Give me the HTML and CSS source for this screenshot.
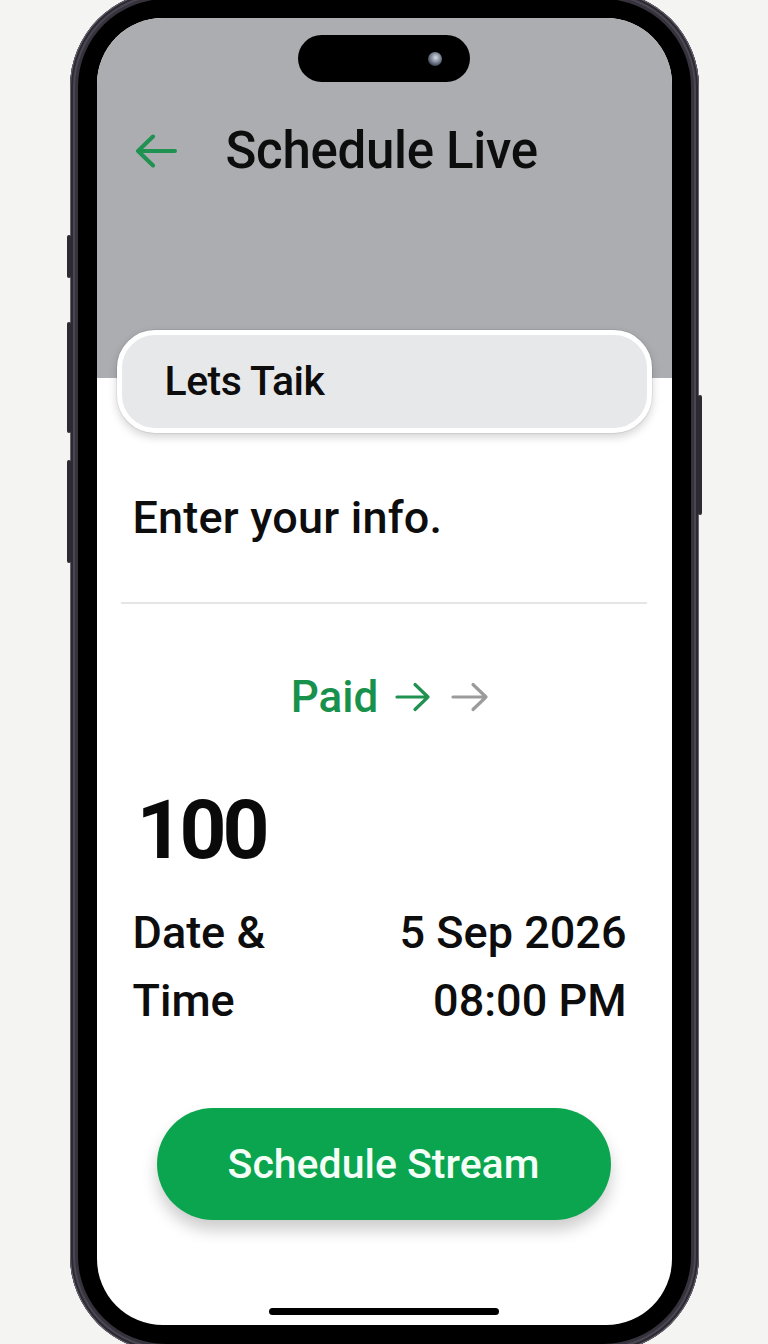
FILE: index.html
```html
<!DOCTYPE html>
<html lang="en">
<head>
<meta charset="utf-8">
<title>Schedule Live</title>
<link rel="stylesheet" href="styles.css">
</head>
<body>
<div class="phone">
  <span class="side-btn btn-action"></span>
  <span class="side-btn btn-vol-up"></span>
  <span class="side-btn btn-vol-down"></span>
  <span class="side-btn btn-power"></span>
  <div class="bezel">
    <div class="screen">
      <header class="header">
        <div class="island"><span class="camera"></span></div>
        <div class="title-row">
          <svg class="back" width="42" height="34" viewBox="0 0 42 34" aria-hidden="true">
            <path d="M40 17 H3 M18 2.5 L3 17 L18 31.5" fill="none" stroke="#1f9150" stroke-width="4" stroke-linecap="round" stroke-linejoin="round"/>
          </svg>
          <h1 class="title">Schedule Live</h1>
        </div>
      </header>
      <div class="card"><span class="card-text">Lets Taik</span></div>
      <p class="prompt">Enter your info.</p>
      <hr class="divider">
      <div class="paid-row">
        <span class="paid">Paid</span>
        <svg class="arrow" width="36" height="30" viewBox="0 0 36 30" aria-hidden="true">
          <path d="M2 15 H33 M20 2.5 L33 15 L20 27.5" fill="none" stroke="#1f9150" stroke-width="3.2" stroke-linecap="round" stroke-linejoin="round"/>
        </svg>
        <svg class="arrow" width="38" height="30" viewBox="0 0 38 30" aria-hidden="true">
          <path d="M2 15 H35 M22 2.5 L35 15 L22 27.5" fill="none" stroke="#9b9b9b" stroke-width="3.2" stroke-linecap="round" stroke-linejoin="round"/>
        </svg>
      </div>
      <div class="amount">100</div>
      <div class="datetime">
        <div class="dt-label">Date &amp;<br>Time</div>
        <div class="dt-value">5 Sep 2026<br>08:00 PM</div>
      </div>
      <button class="cta" type="button">Schedule Stream</button>
      <div class="home-indicator"></div>
    </div>
  </div>
</div>
</body>
</html>
```
FILE: styles.css
```css
html, body {
  margin: 0;
  padding: 0;
}
body {
  width: 768px;
  height: 1344px;
  overflow: hidden;
  background: #f4f4f2;
  font-family: Roboto, "Liberation Sans", Arial, sans-serif;
  font-weight: 500;
  color: #111;
}
.phone {
  position: relative;
  width: 629px;
  height: 1361px;
  margin: -9px auto 0;
  box-sizing: border-box;
  padding: 8px;
  border-radius: 96px;
  background: #37333d;
  box-shadow: inset 0 0 0 1px #6a6572, inset 0 0 0 3px #2c2931, inset 0 0 0 5px #4a4652;
}
.side-btn {
  position: absolute;
  width: 4px;
  background: #2d2a32;
  border-radius: 2px;
}
.btn-action { left: -3px; top: 244px; height: 43px; }
.btn-vol-up { left: -3px; top: 331px; height: 111px; }
.btn-vol-down { left: -3px; top: 469px; height: 103px; }
.btn-power { right: -3px; top: 404px; height: 120px; }
.bezel {
  height: 100%;
  box-sizing: border-box;
  padding: 19px;
  border-radius: 88px;
  background: #000;
}
.screen {
  height: 1307px;
  border-radius: 66px;
  overflow: hidden;
  background: #fff;
  display: flex;
  flex-direction: column;
}
.header {
  height: 360px;
  flex: none;
  box-sizing: border-box;
  padding-top: 17px;
  background: #abadb0;
}
.island {
  width: 172px;
  height: 47px;
  margin: 0 auto;
  border-radius: 24px;
  background: #000;
  display: flex;
  align-items: center;
  justify-content: flex-end;
  padding-right: 28px;
  box-sizing: border-box;
}
.camera {
  width: 14px;
  height: 14px;
  border-radius: 50%;
  background: radial-gradient(circle at 55% 40%, #d6dbe4 0, #8d96a6 35%, #3a4150 75%, #1a1d24 100%);
}
.title-row {
  margin-top: 39px;
  height: 60px;
  display: flex;
  align-items: center;
  padding-left: 38px;
}
.back {
  flex: none;
}
.title {
  margin: 0 0 0 49px;
  font-size: 51px;
  line-height: 60px;
  font-weight: 500;
  letter-spacing: -0.3px;
  color: #0d0d0d;
}
.card {
  flex: none;
  margin: -48px 20px 0;
  height: 103px;
  box-sizing: border-box;
  border: 5px solid #fff;
  border-radius: 38px;
  background: #e7e8ea;
  box-shadow: 0 4px 10px rgba(0, 0, 0, 0.18), 0 0 0 1px rgba(0, 0, 0, 0.06);
  padding-left: 43px;
  display: flex;
  align-items: center;
}
.card-text {
  font-size: 41px;
  line-height: 93px;
  letter-spacing: -0.5px;
  color: #0d0d0d;
}
.prompt {
  margin: 59px 0 0 36px;
  font-size: 45px;
  line-height: 52px;
  letter-spacing: 0.2px;
  color: #0d0d0d;
}
.divider {
  margin: 58px 25px 0 24px;
  border: 0;
  height: 2px;
  background: #e6e6e6;
}
.paid-row {
  margin-top: 67px;
  height: 52px;
  display: flex;
  align-items: center;
  justify-content: center;
  padding-left: 12px;
}
.paid {
  font-size: 44px;
  line-height: 52px;
  color: #17914b;
  margin-right: 17px;
}
.arrow + .arrow {
  margin-left: 20px;
}
.amount {
  margin: 62px 0 0 40px;
  font-size: 82px;
  line-height: 90px;
  font-weight: 700;
  letter-spacing: -4px;
  color: #0a0a0a;
}
.datetime {
  margin: 24px 45px 0 36px;
  display: flex;
  justify-content: space-between;
  font-size: 45px;
  line-height: 68px;
  color: #0d0d0d;
}
.dt-value {
  text-align: right;
}
.cta {
  margin: 73px 61px 0 60px;
  height: 112px;
  flex: none;
  border: 0;
  border-radius: 56px;
  background: #0aa54e;
  color: #f4fff7;
  font-family: Roboto, "Liberation Sans", Arial, sans-serif;
  font-weight: 500;
  font-size: 41px;
  box-shadow: 0 10px 16px rgba(0, 0, 0, 0.2);
  padding: 0;
}
.home-indicator {
  margin: auto auto 10px;
  width: 230px;
  height: 7px;
  border-radius: 4px;
  background: #000;
  flex: none;
}
```
